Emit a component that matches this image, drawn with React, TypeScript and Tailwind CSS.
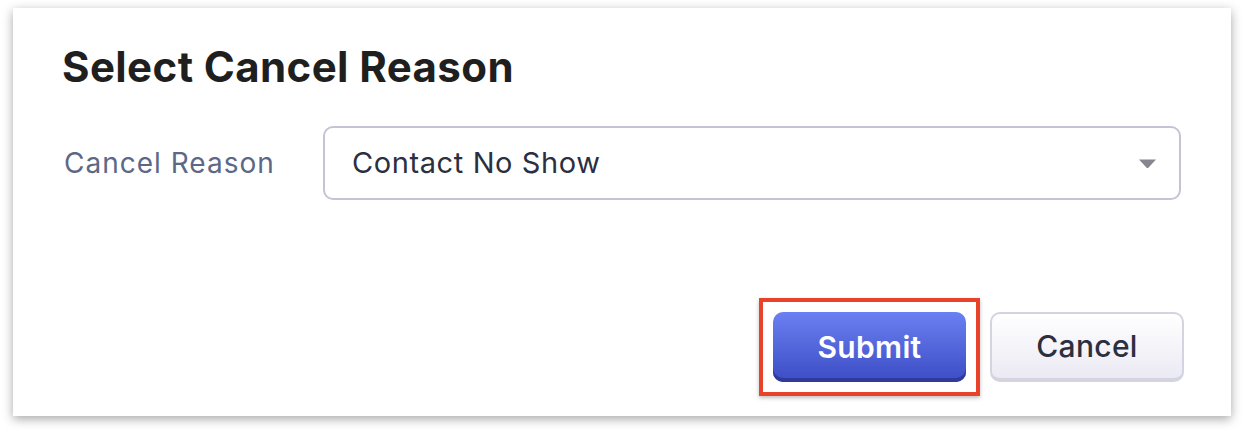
export default function App() {
  return (
    <div className="w-[1244px] h-[434px] bg-white pt-[8px] pl-[13px] font-['Inter','Noto_Sans',sans-serif]">
      <div className="w-[1218px] h-[408px] bg-white shadow-[0_3px_10px_rgba(0,0,0,0.35)] pl-[49px] pr-[47px] pt-[34px] flex flex-col">
        <h2 className="text-[42px] leading-[50px] font-bold text-[#1f1f1f] tracking-[0.4px]">Select Cancel Reason</h2>

        <div className="flex items-center mt-[34px] pr-[3px]">
          <label className="w-[261px] pl-[2px] text-[28px] tracking-[1px] text-[#5d6886]">Cancel Reason</label>
          <div className="flex-1 h-[74px] rounded-[10px] border-2 border-[#c6c4d4] flex items-center pl-[27px] pr-[22px] justify-between">
            <span className="text-[29px] tracking-[0.6px] text-[#2b2f3f]">Contact No Show</span>
            <svg width="19" height="11" viewBox="0 0 19 11" className="mt-[1px]">
              <path d="M1 1.5 H18 L10.6 9.6 Q9.5 10.6 8.4 9.6 Z" fill="#85868f" />
            </svg>
          </div>
        </div>

        <div className="flex justify-end items-center gap-[10px] mt-auto mb-[20px]">
          <div className="border-4 border-[#e8432a] p-[10px] shadow-[0_2px_4px_rgba(0,0,0,0.25)]">
            <button className="w-[193px] h-[70px] rounded-[10px] bg-gradient-to-b from-[#6b80f2] to-[#3d4cc4] shadow-[inset_0_-4px_0_#2e3b9c] text-white text-[30px] tracking-[0.3px] font-semibold">
              Submit
            </button>
          </div>
          <button className="w-[194px] h-[70px] rounded-[10px] border-2 border-[#d3d4df] border-b-[4px] bg-gradient-to-b from-white to-[#ebeaf4] text-[#2b2f3f] text-[30px] tracking-[0.3px] font-medium">
            Cancel
          </button>
        </div>
      </div>
    </div>
  );
}
